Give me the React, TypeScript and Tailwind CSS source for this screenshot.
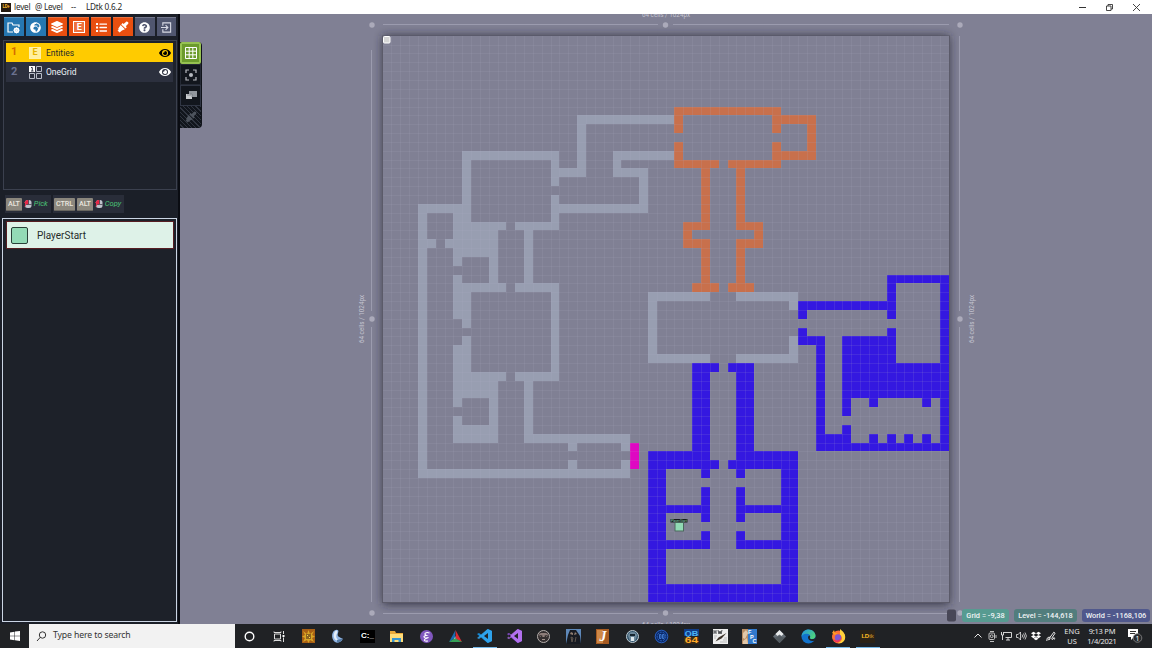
import React from "react";
import { FaEye, FaGlobeAfrica, FaLayerGroup, FaList, FaQuestionCircle, FaDropbox } from "react-icons/fa";

type Cells = [number, number, number, number][];
const S = 566 / 64;
const X0 = 382.6;
const Y0 = 35.8;

/* each entry: column, row, width, height in grid cells */
const gray: Cells = [
  [22, 9, 11, 1], [22, 10, 1, 5], [20, 15, 3, 1],
  [26, 13, 7, 1], [26, 14, 1, 1], [26, 15, 4, 1], [29, 16, 1, 3], [20, 19, 10, 1],
  [9, 13, 11, 1], [9, 14, 1, 7], [19, 14, 1, 3], [19, 18, 1, 3],
  [8, 21, 6, 1], [15, 21, 5, 1],
  [4, 19, 5, 1], [8, 20, 1, 1], [4, 20, 1, 29], [5, 23, 1, 1], [7, 23, 1, 1],
  [8, 22, 5, 3], [8, 25, 1, 1], [8, 27, 1, 1], [12, 25, 1, 3], [16, 22, 1, 6],
  [8, 28, 6, 1], [15, 28, 5, 1], [8, 29, 1, 3], [9, 29, 1, 4], [9, 34, 1, 4], [8, 35, 1, 3],
  [19, 29, 1, 9], [8, 38, 6, 1], [15, 38, 5, 1],
  [8, 39, 5, 2], [8, 41, 1, 1], [8, 43, 1, 1], [12, 41, 1, 3], [8, 44, 5, 2],
  [16, 39, 1, 6], [16, 45, 12, 1], [21, 46, 1, 1], [21, 48, 1, 1], [27, 46, 1, 1], [27, 48, 1, 1], [4, 49, 24, 1],
  [30, 29, 7, 1], [40, 29, 7, 1], [30, 30, 1, 6], [46, 30, 1, 1], [46, 34, 1, 2], [30, 36, 7, 1], [40, 36, 7, 1],
];
const orange: Cells = [
  [33, 8, 12, 1], [33, 9, 1, 2], [33, 12, 1, 2], [44, 9, 1, 2], [44, 12, 1, 2],
  [33, 14, 5, 1], [39, 14, 6, 1], [45, 9, 4, 1], [48, 10, 1, 3], [45, 13, 4, 1],
  [36, 15, 1, 6], [40, 15, 1, 6], [34, 21, 3, 1], [40, 21, 3, 1], [34, 22, 1, 1], [42, 22, 1, 1],
  [34, 23, 3, 1], [40, 23, 3, 1], [36, 24, 1, 4], [40, 24, 1, 4], [35, 28, 3, 1], [39, 28, 3, 1],
];
const blue: Cells = [
  [47, 30, 10, 1], [47, 31, 1, 1], [47, 33, 1, 1], [47, 34, 3, 1], [49, 35, 1, 11],
  [57, 27, 7, 1], [57, 28, 1, 4], [57, 33, 1, 1], [63, 28, 1, 18],
  [52, 34, 6, 3], [52, 37, 11, 4], [52, 41, 1, 2], [52, 44, 1, 1], [55, 41, 1, 1], [61, 41, 1, 1],
  [50, 45, 3, 1], [55, 45, 1, 1], [57, 45, 1, 1], [59, 45, 1, 1], [61, 45, 1, 1], [49, 46, 15, 1],
  [35, 37, 3, 1], [39, 37, 3, 1], [35, 38, 2, 9], [40, 38, 2, 9],
  [30, 47, 7, 1], [40, 47, 7, 1], [30, 48, 8, 1], [39, 48, 8, 1],
  [30, 49, 2, 13], [45, 49, 2, 13], [36, 49, 1, 1], [40, 49, 1, 1], [36, 51, 1, 4], [40, 51, 1, 4],
  [32, 53, 4, 1], [41, 53, 4, 1], [36, 56, 1, 1], [40, 56, 1, 1], [32, 57, 5, 1], [40, 57, 5, 1], [30, 62, 17, 2],
];
const magenta: Cells = [[28, 46, 1, 3]];

const toPath = (c: Cells) =>
  c.map(([x, y, w, h]) => {
    const a = Math.round(X0 + x * S), b = Math.round(Y0 + y * S);
    const e = Math.round(X0 + (x + w) * S), f = Math.round(Y0 + (y + h) * S);
    return `M${a} ${b}H${e}V${f}H${a}Z`;
  }).join("");

const lines = Array.from({ length: 63 }, (_, i) => i + 1);

function World() {
  return (
    <svg className="block h-[612px] w-[972px]" viewBox="180 14 972 612">
      <defs>
        <filter id="shade" x="-10%" y="-10%" width="120%" height="120%"><feGaussianBlur stdDeviation="5" /></filter>
      </defs>
      <rect x="383" y="36" width="566" height="568" fill="#242331" opacity=".85" filter="url(#shade)" />
      <rect x="382" y="35.500" width="568" height="567.500" fill="#5b5a69" />
      <rect x="383" y="36" width="566" height="566" fill="#808094" />
      <path d={toPath(gray)} fill="#989eb1" />
      <path d={toPath(orange)} fill="#c8704c" />
      <path d={toPath(blue)} fill="#3418e0" />
      <path d={toPath(magenta)} fill="#df08c2" />
      <path
        d={lines.map((i) => `M${Math.round(X0 + i * S) + 0.5} 36V602M383 ${Math.round(Y0 + i * S) + 0.5}H949`).join("")}
        stroke="#b1b3cb" strokeOpacity=".13" fill="none"
      />
      <rect x="383.500" y="36.500" width="6.500" height="6.500" rx="1" fill="#d6d6d6" stroke="#fff" />
      <g stroke="#a4a4b7" strokeOpacity=".75">
        <path d="M383 24.500H658M673 24.500H949M383 613.500H658M673 613.500H949M371.500 50V311M371.500 327V602M959.500 36V311M959.500 327V602" />
      </g>
      <g fill="#abaaba">
        {[[372, 25], [665.500, 25], [960, 25], [372, 319], [960, 319], [372, 613], [665.500, 613], [960, 613]].map(([x, y]) => (
          <circle key={`${x}-${y}`} cx={x} cy={y} r="2.700" />
        ))}
      </g>
      <g fill="#c5c5d1" className="font-['Roboto',sans-serif] text-[6.300px]" textAnchor="middle">
        <text x="666" y="17">64 cells / 1024px</text>
        <text x="666" y="627">64 cells / 1024px</text>
        <text transform="translate(364 319) rotate(-90)">64 cells / 1024px</text>
        <text transform="translate(974 319) rotate(-90)">64 cells / 1024px</text>
      </g>
      <rect x="670.500" y="519" width="17" height="3.500" fill="#161a1d" />
      <text x="679" y="522.200" fill="#8fd5b0" textAnchor="middle" className="font-['Roboto',sans-serif] text-[3.300px]">PlayerStart</text>
      <rect x="675" y="522.500" width="8.500" height="8.500" fill="#91dab4" stroke="#4b675d" />
      <rect x="947" y="609.500" width="9" height="12" rx="2" fill="#484757" />
    </svg>
  );
}

const FolderGear = () => (
  <svg className="h-[13px] w-[13px]" viewBox="0 0 13 13" fill="none" stroke="#fff" strokeWidth="1.200">
    <path d="M6 11H1V2h4l1 2h6v2" /><circle cx="9.500" cy="9.300" r="2" strokeWidth="1.600" />
    <path d="M9.500 6v6.600M6.300 9.300h6.400M7.200 7l4.600 4.600M11.800 7l-4.600 4.600" strokeWidth=".7" />
  </svg>
);
const Brush = () => (
  <svg className="h-3 w-3" viewBox="0 0 12 12" fill="currentColor">
    <path d="M9.200.7c.9-.9 2.900 1 2 2L8.800 5.300l1 1-1.300 1.300-4.200-4.200 1.300-1.300 1 1z" />
    <path d="M3.700 4l4.200 4.200L5 9.400 2.600 11.500.5 9.400l1-.5-.2-1.300z" />
  </svg>
);
const EBox = ({ className = "" }: { className?: string }) => (
  <span className={`flex h-3 w-3 items-center justify-center border text-[9px] font-bold leading-none ${className}`}>E</span>
);
const ExitIcon = () => (
  <svg className="h-[11px] w-[11px]" viewBox="0 0 12 12" fill="none" stroke="#d8dae5" strokeWidth="1.200">
    <path d="M2 4V1h8.500v10H2V8M0 6h7M5 3.500L7.500 6 5 8.500" />
  </svg>
);
const GridOne = () => (
  <svg className="h-[13px] w-[13px]" viewBox="0 0 13 13" fill="none" stroke="#b9bdc8">
    <rect x="0" y="0" width="6" height="6" fill="#fff" stroke="none" /><path d="M2 1.500h1.300V5M2 5h2.500" stroke="#333747" />
    <path d="M7.500.5h5v5h-5zM.5 7.500h5v5h-5zM7.500 7.500h5v5h-5z" />
  </svg>
);

const tools: [string, React.ReactNode][] = [
  ["bg-[#2677b1]", <FolderGear />],
  ["bg-[#2677b1]", <FaGlobeAfrica size={11} />],
  ["bg-[#e94f10]", <FaLayerGroup size={12} />],
  ["bg-[#e94f10]", <EBox className="border-white bg-white/20" />],
  ["bg-[#e94f10]", <FaList size={11} />],
  ["bg-[#e94f10]", <Brush />],
  ["bg-[#50566f]", <FaQuestionCircle size={11} />],
  ["bg-[#50566f]", <ExitIcon />],
];

const Key = ({ children }: { children: React.ReactNode }) => (
  <span className="flex h-[13px] items-center rounded-[1px] border-b border-[#69665f] bg-[#8b877d] px-[2px] text-[7.200px] font-medium leading-none tracking-[-0.1px] text-[#e9e6df]">{children}</span>
);
const Mouse = () => (
  <svg className="h-[10px] w-2" viewBox="0 0 8 9">
    <rect x="1" y=".5" width="6.500" height="8" rx="2.500" fill="#bfc2cb" /><path d="M4.500 5H1V3Q1 .5 3.500.5h1z" fill="#e82344" /><path d="M4.500 .5v4M1 5h6.500" stroke="#3c3440" strokeWidth=".7" />
    <path d="M.5 2.500l1.500 2-1 2.500" stroke="#ea3652" fill="none" />
  </svg>
);

function Sidebar() {
  return (
    <aside className="flex h-[612px] w-[180px] shrink-0 flex-col border-r-2 border-[#0a0c12] bg-[#1b1f28] pl-[3px] font-['Roboto',sans-serif]">
      <div className="mt-[3px] flex h-[20px] gap-[2px] pl-[1px]">
        {tools.map(([c, icon], i) => (
          <div key={i} className={`flex h-[19px] w-[19.800px] items-center justify-center border-t border-white/20 text-white ${c}`}>{icon}</div>
        ))}
      </div>
      <div className="mt-[3px] h-[150px] w-[174px] border border-[#3b404e] bg-[#1e222b] py-[2px] pl-[2px] pr-[3px]">
        <div className="flex h-[19px] items-center bg-[#ffcb00] text-[#292c2a]">
          <span className="w-[23px] pl-[5px] text-[11px] font-bold text-[#d66b00]">1</span>
          <EBox className="border-[#fff1a8] bg-[#fff0a0] text-[#e6b300]" />
          <span className="ml-[5px] flex-1 pt-px text-[8.500px]">Entities</span>
          <FaEye size={12} className="mr-[2px] text-black" />
        </div>
        <div className="flex h-[20px] items-center bg-[#2c303e] text-[8.500px] text-[#edf0f5]">
          <span className="w-[23px] pl-[5px] text-[11px] font-bold text-[#6b7290]">2</span>
          <GridOne />
          <span className="ml-[4px] flex-1">OneGrid</span>
          <FaEye size={12} className="mr-[2px] text-white" />
        </div>
      </div>
      <div className="mt-[5px] flex h-[18px] gap-[2px] pl-[2px] text-[7.500px] italic text-[#4bc676]">
        <div className="flex w-[46px] items-center gap-[2px] bg-[#292d39] pl-[1px]"><span className="not-italic"><Key>ALT</Key></span><Mouse />Pick</div>
        <div className="flex w-[71px] items-center gap-[2px] bg-[#292d39] pl-[1px]"><span className="flex gap-[2px] not-italic"><Key>CTRL</Key><Key>ALT</Key></span><Mouse />Copy</div>
      </div>
      <div className="-ml-[1px] mt-[5px] h-[404px] w-[175px] border border-[#cbd5e4] bg-[#1d2129] py-[2px] pl-[3px] pr-[2px]">
        <div className="flex h-[28px] items-center border border-[#561d22] bg-[#def2e8] pl-1">
          <span className="h-[17px] w-[17px] rounded-[2px] border border-[#294038] bg-[#93dab6]" />
          <span className="ml-[9px] text-[10px] text-[#252b2a]">PlayerStart</span>
        </div>
      </div>
    </aside>
  );
}

function ViewTools() {
  return (
    <div className="absolute left-0 top-[28px] flex w-[22px] flex-col rounded-r bg-[#10131a] pr-px">
      <div className="flex h-[22px] w-[21px] items-center justify-center rounded-[2px] border-2 border-[#96c251] bg-[#6c9b2d]">
        <svg className="h-3 w-3" viewBox="0 0 12 12" fill="none" stroke="#fff"><path d="M.5.5h11v11H.5zM4.200 0v12M7.800 0v12M0 4.200h12M0 7.800h12" /></svg>
      </div>
      <div className="flex h-[21px] items-center justify-center border border-[#252a35] bg-[#12161d]">
        <svg className="h-3 w-3" viewBox="0 0 12 12" fill="none" stroke="#b7bac0" strokeWidth="1.200"><path d="M1 4V1h3M8 1h3v3M11 8v3H8M4 11H1V8" /><circle cx="6" cy="6" r="2" fill="#b7bac0" stroke="none" /></svg>
      </div>
      <div className="flex h-[21px] items-center justify-center border border-[#303644] bg-[#12161d]">
        <svg className="h-[11px] w-3" viewBox="0 0 12 11"><path d="M4 1h8v6H4z" fill="#92979e" /><path d="M1 4h6v5H1z" fill="#c6c9cc" /><path d="M2 5h4V3M7 7V4" stroke="#606770" fill="none" strokeWidth=".6" /></svg>
      </div>
      <div className="flex h-[22px] items-center justify-center rounded-br bg-[repeating-linear-gradient(45deg,#11151c_0px,#11151c_2px,#303540_2px,#303540_3px)] text-[#4d535d]"><Brush /></div>
    </div>
  );
}

const Vs = ({ purple = false }: { purple?: boolean }) => (
  <svg className="h-4 w-4" viewBox="0 0 16 16">
    <path d="M11 1L4.500 7 2 5 0 6l10.500 9L15 13V3z" fill={purple ? "#8d50d7" : "#1689d5"} />
    <path d="M11 15L4.500 9 2 11 0 10 10.500 1 15 3v10z" fill={purple ? "#b875f2" : "#32a7ee"} opacity=".85" />
    <path d="M11 5v6L7 8z" fill="#202225" />{purple && <path d="M1.800 6v4L4 8z" fill="#202225" />}
  </svg>
);
const Svg = ({ children }: { children: React.ReactNode }) => <svg className="h-[15px] w-[15px]" viewBox="0 0 15 15">{children}</svg>;

const apps: React.ReactNode[] = [
  <Svg><circle cx="7.500" cy="7.500" r="4.300" fill="none" stroke="#fff" strokeWidth="1.400" /></Svg>,
  <Svg><path d="M2.500 5h6v5h-6zM2 2.500v1h7v-1M2 12.500v-1h7v1M11.500 2v3M11.500 8.500V13" fill="none" stroke="#ddd" /><path d="M10.500 6h2v2h-2z" fill="#fff" /></Svg>,
  <Svg><path d="M1 0h13v14H1z" fill="#a85f14" /><path d="M2 2l4 3 1.500-4L9 5l4-3-2 4 3 1.500L11 9l2 4-4-2-1.500 3L6 11l-4 2 2-4-3-1.500L4 6z" fill="#d8a627" /><path d="M5 5h5v5H5z" fill="#8c6420" /><path d="M6 6h1v1H6zM8 8h1v1H8z" fill="#f6d64b" /></Svg>,
  <Svg><path d="M4.500 1.500C7 0 9.500 1 8 4c-1 2.500 0 4 4.500 5.500C13 12 8 15 5 13 1.500 10.500 1 4 4.500 1.500z" fill="#91b5e4" /><path d="M6 1.500c2 0 1.500 2 .5 4s0 4 2 6c-5 1-6.500-7-2.500-10z" fill="#e4edf8" /><path d="M7 11l5.500-1.500c0 2-3 4-5.500 4z" fill="#567da7" /></Svg>,
  <span className="flex h-[13px] w-[15px] items-center justify-center bg-black font-['Liberation_Sans',sans-serif] text-[8px] font-bold text-white">C:_</span>,
  <Svg><path d="M1 2h5l1 2h7v9H1z" fill="#e9a93a" /><path d="M1 5h13v8H1z" fill="#ffdc78" /><path d="M3 13V9h9v4h-2.500v-2h-4v2z" fill="#3696d2" /></Svg>,
  <Svg><circle cx="7.500" cy="7.500" r="6.500" fill="#8057be" /><path d="M10.500 4C7 2.500 4 5 7.500 6.500 3 7 5 10 9.500 8.500 3 11 5 12.500 9 12" fill="none" stroke="#fff" strokeWidth="1.100" /></Svg>,
  <Svg><path d="M7.500 1L1 13l6-4z" fill="#176db1" /><path d="M7.500 1L14 13 8 10z" fill="#d92932" /><path d="M1 13l6-4 7 4z" fill="#35a057" /><path d="M7.500 7v2.500L6 10z" fill="#d6d9dc" /></Svg>,
  <Vs />,
  <Vs purple />,
  <Svg><circle cx="7.500" cy="7.500" r="6" fill="#342f30" stroke="#b6afad" /><path d="M3 5l2-1h5l2 1-1 3H4z" fill="#8d7d79" /><path d="M4 6l3 1-2 1zM11 6L8 7l2 1z" fill="#151415" /><path d="M6 10.500h3" stroke="#a3948e" /></Svg>,
  <Svg><path d="M0 0h15v15H0z" fill="#5e88b9" /><path d="M4 1h6l4 6 1 8H0l2-9z" fill="#171b22" /><path d="M5 3l2 1v2L4 5zM9 3L8 6l3-1z" fill="#8e7d70" /><path d="M5 8l2 1-1 4zM10 8l-1 5" stroke="#5f574f" fill="none" /></Svg>,
  <Svg><path d="M1 0h13v15H1z" fill="#a75b22" /><path d="M2 1h6v13H2z" fill="#cd8847" /><text x="4.500" y="12" className="font-['Liberation_Serif',serif] text-[14px] font-bold italic" fill="#fff">J</text></Svg>,
  <Svg><circle cx="7.500" cy="7.500" r="6" fill="#34556d" stroke="#becbd2" /><path d="M3 7Q3 3 7.500 3t4.500 4L10 12H5z" fill="#6d899b" /><path d="M5 5h5v2H5z" fill="#172630" /><path d="M6 8h3v4H6z" fill="#dfe8ed" /></Svg>,
  <Svg><circle cx="7.500" cy="7.500" r="6.300" fill="#092868" stroke="#2b62c4" /><circle cx="7.500" cy="7.500" r="4.300" fill="none" stroke="#3a78d6" strokeWidth=".8" strokeDasharray="2 1" /><path d="M5.500 5.500h1.500v4H5.500zM8.500 5.500h1.500v4H8.500z" stroke="#4a89e4" strokeWidth=".8" fill="none" /></Svg>,
  <Svg>
    <path d="M0 0h15v7H0z" fill="#123d88" /><path d="M0 8h15v7H0z" fill="#3a2a18" />
    <text x=".8" y="6.600" textLength="13.400" lengthAdjust="spacingAndGlyphs" fill="#4bb4f5" className="font-['Liberation_Sans',sans-serif] text-[8px] font-bold">QB</text>
    <text x=".8" y="14.400" textLength="13.400" lengthAdjust="spacingAndGlyphs" fill="#ffa928" className="font-['Liberation_Sans',sans-serif] text-[8.500px] font-bold">64</text>
  </Svg>,
  <Svg><path d="M0 0h15v15H0z" fill="#eee" /><path d="M1 1v4M3 1v4M1 3h2M5 1l1 4 1-3 1 3 1-4" fill="none" stroke="#24272b" strokeWidth=".8" /><path d="M13.500 4l-5 5.500-6 3 3-4z" fill="#3b3229" /><path d="M1 7h3M1 9h2M11 9h3M10 11h4M7 13h7" stroke="#999" strokeWidth=".6" /></Svg>,
  <Svg><path d="M0 0h15v15H0z" fill="#3279cc" /><path d="M0 0h6v15H0z" fill="#b98d64" /><path d="M1 4l3-3 2 3-3 6-2-1zM1 12l4-3 1 6H1z" fill="#e1c7a8" /><text x="6" y="5" fill="#fff" className="font-['Liberation_Sans',sans-serif] text-[5.500px] font-bold">F</text><text x="8" y="9.700" fill="#fff" className="font-['Liberation_Sans',sans-serif] text-[5.500px] font-bold">P</text><text x="10.500" y="14.400" fill="#fff" className="font-['Liberation_Sans',sans-serif] text-[5.500px] font-bold">C</text></Svg>,
  <Svg><path d="M7.500 1L14 7.500 7.500 14 1 7.500z" fill="#687078" /><path d="M7.500 1L11.500 5 9.500 7 7.500 5.500 5.500 7 3.500 5z" fill="#e8eaeb" /><path d="M1 7.500l3 1 3.500-2 3.500 2 3-1L7.500 14z" fill="#535b61" /></Svg>,
  <Svg>
    <defs><linearGradient id="edge" x2="1" y2=".6"><stop stopColor="#1f94e4" /><stop offset="1" stopColor="#4fd37c" /></linearGradient></defs>
    <circle cx="7.500" cy="7.500" r="7" fill="#1273cc" />
    <path d="M.5 7.500C1 3 4 .5 7.500.5c4 0 7 3 7 6.200 0 2-1.500 3.300-3.500 3.300-1.500 0-2.500-.6-2-1.500C10 6 7.500 4.500 5 4.800 2.500 5 1 6.500.5 7.500z" fill="url(#edge)" />
    <path d="M9 8.500c-.6 1 .5 1.700 2 1.700 1.300 0 2.300-.4 3-1.200v1.500l-1 1.300c-3 .8-6-.8-6-3.300 0-1 .6-1.700 1.300-1.900.8.300 1 1 .7 1.900z" fill="#202326" />
  </Svg>,
  <Svg><circle cx="7.500" cy="8" r="6.500" fill="#ff7132" /><path d="M9 0c4 3 6 6 5 10-1 3-4 5-7 4 5-2 5-6 2-8z" fill="#ffd13c" /><path d="M1 4l2-3 1 3 3 0-3 2z" fill="#ff9c24" /><circle cx="7" cy="8.500" r="3.200" fill="#8056cf" /><path d="M2 10c3 2 6 2 8-1-1 5-6 6-8 1z" fill="#ef335d" /></Svg>,
  <span className="flex h-[13px] w-[15px] items-center justify-center bg-[#2c2317] font-['Liberation_Sans',sans-serif] text-[6px] font-bold tracking-[-0.3px] text-[#ffbe24]">LD<span className="text-[#a57920]">tk</span></span>,
];

const trayIcons: React.ReactNode[] = [
  <svg className="h-[10px] w-[10px]" viewBox="0 0 10 10" fill="none" stroke="currentColor"><path d="M1.500 6.500L5 3l3.500 3.500" /></svg>,
  <svg className="h-[11px] w-[9px]" viewBox="0 0 9 11" fill="none" stroke="currentColor" strokeWidth=".8"><rect x="1" y="2" width="5.500" height="6.500" rx="1" /><circle cx="3.700" cy="5.200" r="1.400" /><path d="M2 .500h4M2 10.500h4M8 4v3" /></svg>,
  <svg className="h-[10px] w-[11px]" viewBox="0 0 11 10" fill="none" stroke="currentColor" strokeWidth=".9"><path d="M3 1.500h7.500v5H4.500M5 9h4M7 6.500V9M.5 1v3h2V1M1.500 4v5" /></svg>,
  <svg className="h-[10px] w-[11px]" viewBox="0 0 11 10" fill="none" stroke="currentColor" strokeWidth=".8"><path d="M.5 3.500h1.700L4.500 1v8L2.200 6.500H.5zM6 3.500q1.200 1.500 0 3M7.500 2.500q2 2.500 0 5M9 1.500q2.800 3.500 0 7" /></svg>,
  <FaDropbox size={10} className="text-white" />,
  <svg className="h-[11px] w-[10px]" viewBox="0 0 10 11" fill="none" stroke="currentColor" strokeWidth="1"><path d="M.8 10Q.5 6.500 3 6q2 .3.800 2T2.500 8.800 5 5l2.800-3.800 1.300 1L6.500 6Q5 8.800 6.200 8.600T8 6.500Q9 7 8.500 8.500" /></svg>,
];

function Taskbar() {
  return (
    <footer className="flex h-[24px] items-stretch bg-[#202225] font-['Noto_Sans',sans-serif] text-white">
      <div className="flex w-[29px] items-center justify-center">
        <svg className="h-[10px] w-[10px]" viewBox="0 0 10 10" fill="#fff"><path d="M0 1.400l4.500-.7v4H0zM5 .600L10 0v4.700H5zM0 5.200h4.500v4L0 8.600zM5 5.200h5V10l-5-.7z" /></svg>
      </div>
      <div className="flex w-[206px] items-center bg-[#f2f2f2] pl-[7px] text-[8.700px] tracking-[-0.130px] text-[#343434]">
        <svg className="h-[11px] w-[11px]" viewBox="0 0 11 11" fill="none" stroke="#333"><circle cx="6.500" cy="4" r="3.200" /><path d="M4.300 6.300L1 10" /></svg>
        <span className="ml-[6px]">Type here to search</span>
      </div>
      <div className="flex">
        {apps.map((a, i) => (
          <div key={i} className="flex w-[29.430px] items-center justify-center">
            <div className={`flex h-[24px] w-6 shrink-0 items-center justify-center border-y ${i === 8 || i >= 20 ? "border-t-transparent border-b-[#75b8e8]" : "border-transparent"}`}>{a}</div>
          </div>
        ))}
      </div>
      <div className="ml-auto flex items-center text-[#e6e6e6]">
        {trayIcons.map((icon, i) => (
          <span key={i} className="flex w-[14.600px] items-center justify-center">{icon}</span>
        ))}
        <div className="ml-[4px] w-5 text-center text-[7.500px] leading-[10px]">ENG<br />US</div>
        <div className="ml-[4px] w-[32px] whitespace-nowrap text-center text-[7.500px] leading-[10px] tracking-[-0.250px]">9:13 PM<br />1/4/2021</div>
        <div className="ml-[10px] mr-[9px] flex">
          <svg className="h-[16px] w-[15px]" viewBox="0 0 15 16"><path d="M0 1h10v8H6l-3 3V9H0z" fill="#fff" /><path d="M2 3.500h6M2 5.500h5" stroke="#333" /><circle cx="9.500" cy="10" r="4.300" fill="#292b2e" stroke="#888" strokeWidth=".8" /><text x="7.600" y="12.500" fill="#fff" className="font-['Noto_Sans',sans-serif] text-[7px]">1</text></svg>
        </div>
      </div>
    </footer>
  );
}

const Badge = ({ className, children }: { className: string; children: React.ReactNode }) => (
  <span className={`flex h-[13px] items-center justify-center whitespace-nowrap rounded-[3px] text-[7.400px] font-medium text-[#f1f4f5] ${className}`}>{children}</span>
);

export default function App() {
  return (
    <div className="flex h-[648px] w-[1152px] flex-col overflow-hidden bg-[#808094]">
      <header className="flex h-[14px] items-center bg-white font-['Noto_Sans',sans-serif] text-[8.200px] tracking-[-0.220px] text-[#272727]">
        <span className="ml-[1px] flex h-[9px] w-[10px] items-center justify-center bg-[#241a10] font-['Roboto',sans-serif] text-[4.500px] font-bold text-[#f7b72c]">LD+</span>
        <span className="ml-[3px] w-[21px]">level</span>
        <span className="w-[36px]">@ Level</span>
        <span className="w-[15px]">--</span>
        <span>LDtk 0.6.2</span>
        <div className="ml-auto flex items-center gap-[20px] pr-[12px]">
          <svg className="h-2 w-[7px]" viewBox="0 0 7 8" stroke="#333"><path d="M0 4.500h7" /></svg>
          <svg className="h-[7px] w-[7px]" viewBox="0 0 7 7" fill="none" stroke="#333" strokeWidth=".9"><path d="M.5 2h4.500v4.500H.5zM2 2V.5h4.500V5H5" /></svg>
          <svg className="h-[7px] w-[7px]" viewBox="0 0 7 7" stroke="#333" strokeWidth=".9"><path d="M0 0l7 7M7 0L0 7" /></svg>
        </div>
      </header>
      <main className="flex h-[610px] overflow-hidden">
        <Sidebar />
        <section className="relative h-[612px] w-[972px]">
          <World />
          <ViewTools />
          <div className="absolute right-[2px] top-[595px] flex gap-[5px] font-['Roboto',sans-serif]">
            <Badge className="w-[47px] bg-[#579b91]">Grid = -9,38</Badge>
            <Badge className="w-[63px] bg-[#527d7d]">Level = -144,618</Badge>
            <Badge className="w-[68px] bg-[#50588c]">World = -1168,106</Badge>
          </div>
        </section>
      </main>
      <Taskbar />
    </div>
  );
}
